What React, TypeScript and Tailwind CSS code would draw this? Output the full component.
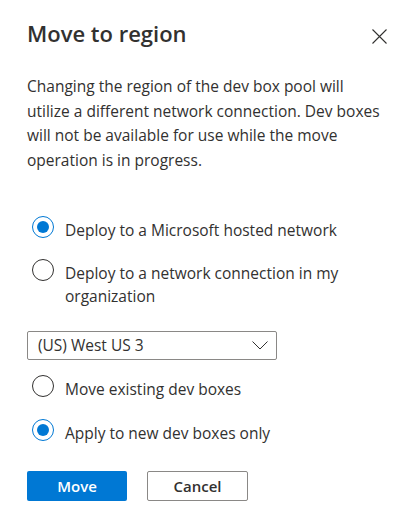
import { useState } from 'react';

type Option = { value: string; label: string };

const NETWORK_OPTIONS: Option[] = [
  { value: 'hosted', label: 'Deploy to a Microsoft hosted network' },
  { value: 'own', label: 'Deploy to a network connection in my organization' },
];

const MOVE_OPTIONS: Option[] = [
  { value: 'existing', label: 'Move existing dev boxes' },
  { value: 'new', label: 'Apply to new dev boxes only' },
];

function Radio({
  option,
  checked,
  onSelect,
}: {
  option: Option;
  checked: boolean;
  onSelect: () => void;
}) {
  return (
    <label className="ml-[5px] flex items-start gap-[11px] cursor-pointer" onClick={onSelect}>
      <span
        className={
          checked
            ? 'mt-[-3px] w-[22px] h-[22px] shrink-0 rounded-full border-[1.5px] border-[#0078d4] flex items-center justify-center'
            : 'mt-[-3px] w-[22px] h-[22px] shrink-0 rounded-full border-[1.5px] border-[#323130]'
        }
      >
        {checked && <span className="w-[12px] h-[12px] rounded-full bg-[#0078d4]" />}
      </span>
      <span className="text-[15.5px] leading-[23px] text-[#323130] w-[285px]">{option.label}</span>
    </label>
  );
}

export default function App() {
  const [network, setNetwork] = useState('hosted');
  const [move, setMove] = useState('new');

  return (
    <div
      className="w-[417px] h-[531px] bg-white pt-[18px] px-[27px]"
      style={{ fontFamily: '"Open Sans", "Noto Sans", sans-serif' }}
    >
      {/* Header */}
      <div className="flex items-start justify-between">
        <h2 className="text-[22px] leading-[30px] font-semibold text-[#323130]">Move to region</h2>
        <button className="mt-[11px] mr-[3px] text-[#323130]" aria-label="Close">
          <svg width="15" height="15" viewBox="0 0 15 15" fill="none">
            <path d="M0.5 0.5L14.5 14.5M14.5 0.5L0.5 14.5" stroke="currentColor" strokeWidth="1.1" />
          </svg>
        </button>
      </div>

      <p className="mt-[26px] w-[355px] text-[15.5px] leading-[24.5px] text-[#323130]">
        Changing the region of the dev box pool will utilize a different network connection. Dev boxes
        will not be available for use while the move operation is in progress.
      </p>

      {/* Network */}
      <div className="mt-[47px] flex flex-col gap-[20px]">
        {NETWORK_OPTIONS.map((o) => (
          <Radio key={o.value} option={o} checked={network === o.value} onSelect={() => setNetwork(o.value)} />
        ))}
      </div>

      <div className="mt-[23px] w-[250px] h-[29px] border border-[#8a8886] rounded-[2px] flex items-center justify-between pl-[10px] pr-[8px] text-[15.5px] text-[#323130]">
        <span>(US) West US 3</span>
        <svg width="16" height="9" viewBox="0 0 16 9" fill="none">
          <path d="M0.5 0.5L8 8L15.5 0.5" stroke="#323130" strokeWidth="1" />
        </svg>
      </div>

      {/* Move mode */}
      <div className="mt-[18px] flex flex-col gap-[21px]">
        {MOVE_OPTIONS.map((o) => (
          <Radio key={o.value} option={o} checked={move === o.value} onSelect={() => setMove(o.value)} />
        ))}
      </div>

      {/* Actions */}
      <div className="mt-[26px] flex gap-[20px]">
        <button className="w-[100px] h-[30px] rounded-[2px] bg-[#0078d4] text-white text-[15px] font-semibold">
          Move
        </button>
        <button className="w-[101px] h-[30px] rounded-[2px] border border-[#8a8886] bg-white text-[#323130] text-[15px] font-semibold">
          Cancel
        </button>
      </div>
    </div>
  );
}
